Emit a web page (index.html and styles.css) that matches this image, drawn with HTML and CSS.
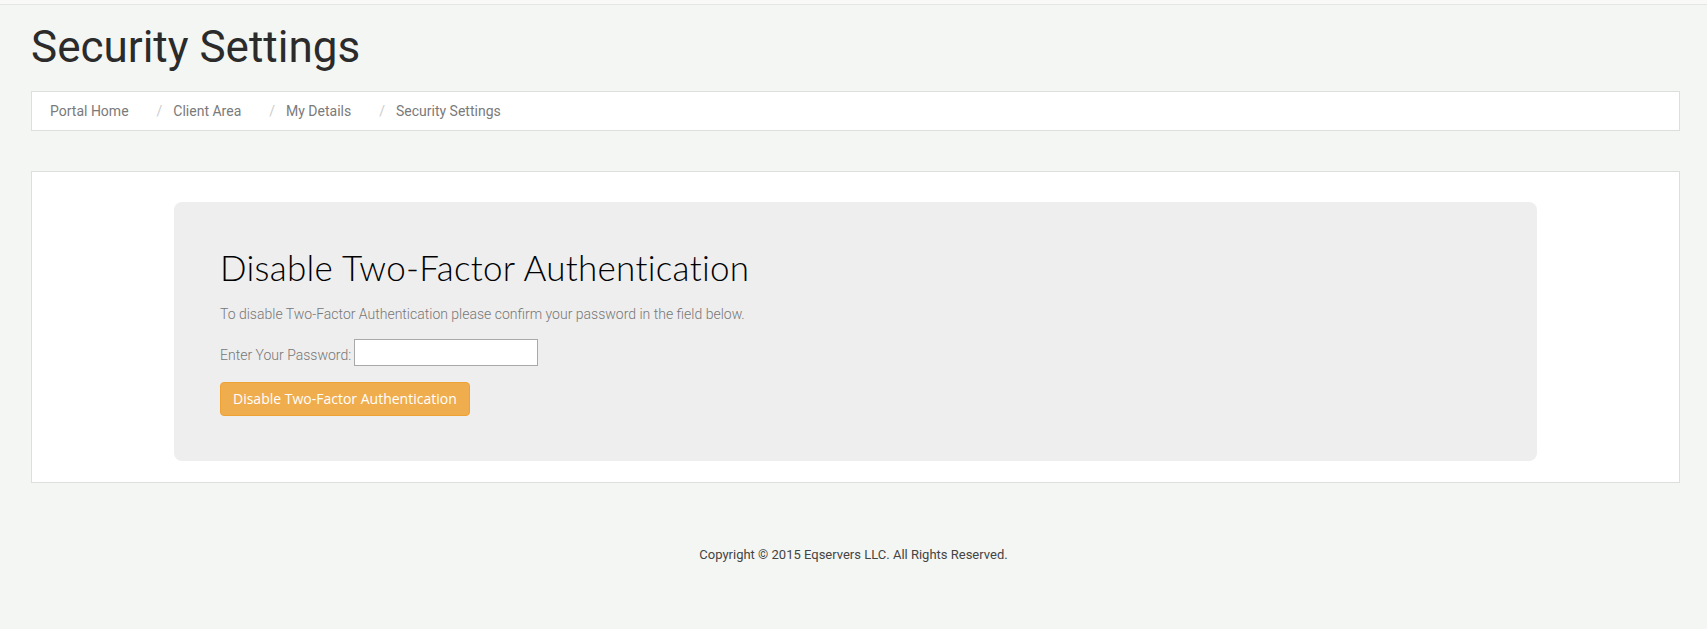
FILE: index.html
```html
<!DOCTYPE html>
<html lang="en">
<head>
    <meta charset="UTF-8">
    <meta name="viewport" content="width=device-width, initial-scale=1.0">
    <title>Security Settings</title>
    <link rel="stylesheet" href="styles.css">
</head>
<body>
    <div class="topStrip"></div>

    <div class="mainContainer">
        <h1 class="pageTitle">Security Settings</h1>

        <!-- Breadcrumb -->
        <ol class="breadcrumb">
            <li><a href="#">Portal Home</a></li>
            <li><a href="#">Client Area</a></li>
            <li><a href="#">My Details</a></li>
            <li class="active">Security Settings</li>
        </ol>

        <div class="contentBox">
            <div class="jumbo">
                <h2>Disable Two-Factor Authentication</h2>
                <p>To disable Two-Factor Authentication please confirm your password in the field below.</p>

                <form class="disableForm" autocomplete="off">
                    <div class="passRow">
                        <label for="pwfield">Enter Your Password:</label>
                        <input type="password" name="pwfield" id="pwfield">
                    </div>
                    <input type="submit" class="btnWarning" value="Disable Two-Factor Authentication">
                </form>
            </div>
        </div>
    </div>

    <p class="copyright">Copyright &copy; 2015 Eqservers LLC. All Rights Reserved.</p>
</body>
</html>
```

FILE: styles.css
```css
body
{
  margin: 0;
  font-family: Roboto, "Liberation Sans", sans-serif;
  background: #f4f6f3;
  color: #777;
}

.topStrip {
    height: 4px;
    background: #f9faf8;
    border-bottom: 1px solid #e4e6e3;
}

.mainContainer {
    margin: 0 27px 0 31px;
}

.pageTitle {
    font-family: Roboto, sans-serif;
    font-weight: 400;
    font-size: 44px;
    line-height: 48px;
    color: #2b2b2b;
    margin: 18px 0 20px;
}

.breadcrumb {
    display: flex;
    list-style: none;
    margin: 0;
    padding: 9px 18px;
    background: #fff;
    border: 1px solid #dcdfdb;
    font-size: 14px;
    line-height: 20px;
}
.breadcrumb a {
    color: #7a7a7a;
    text-decoration: none;
}
.breadcrumb li + li::before {
    content: "/";
    color: #ccc;
    padding: 0 11px 0 28px;
}
.breadcrumb .active {
    color: #7a7a7a;
}

.contentBox {
    margin-top: 40px;
    background: #fff;
    border: 1px solid #dcdfdb;
    padding: 30px 142px 21px;
}

.jumbo {
    background: #eeeeee;
    border-radius: 8px;
    padding: 47px 46px 45px;
}
.jumbo h2 {
    font-family: Lato, sans-serif;
    font-weight: 300;
    font-size: 35px;
    letter-spacing: 0.3px;
    line-height: 37px;
    color: #000;
    margin: 0 0 19px;
}
.jumbo p {
    font-size: 14px;
    font-weight: 300;
    line-height: 18px;
    margin: 0;
}

.passRow {
    display: flex;
    align-items: flex-end;
    gap: 3px;
    margin-top: 16px;
    font-size: 14px;
    font-weight: 300;
    line-height: 18px;
}
.passRow label {
    margin-bottom: 2px;
}
input[type=password] {
    width: 184px;
    height: 27px;
    box-sizing: border-box;
    margin: 0;
    border: 1px solid #a9a9a9;
    background: #fff;
}

.btnWarning {
    display: block;
    margin-top: 16px;
    font-family: "Open Sans", sans-serif;
    font-size: 14px;
    line-height: 20px;
    color: #fff;
    background-color: #f0ad4e;
    border: 1px solid #eea236;
    border-radius: 4px;
    padding: 6px 12px;
    cursor: pointer;
}

.copyright {
    text-align: center;
    font-size: 13px;
    line-height: 18px;
    color: #444;
    margin: 63px 0 0;
}
```
